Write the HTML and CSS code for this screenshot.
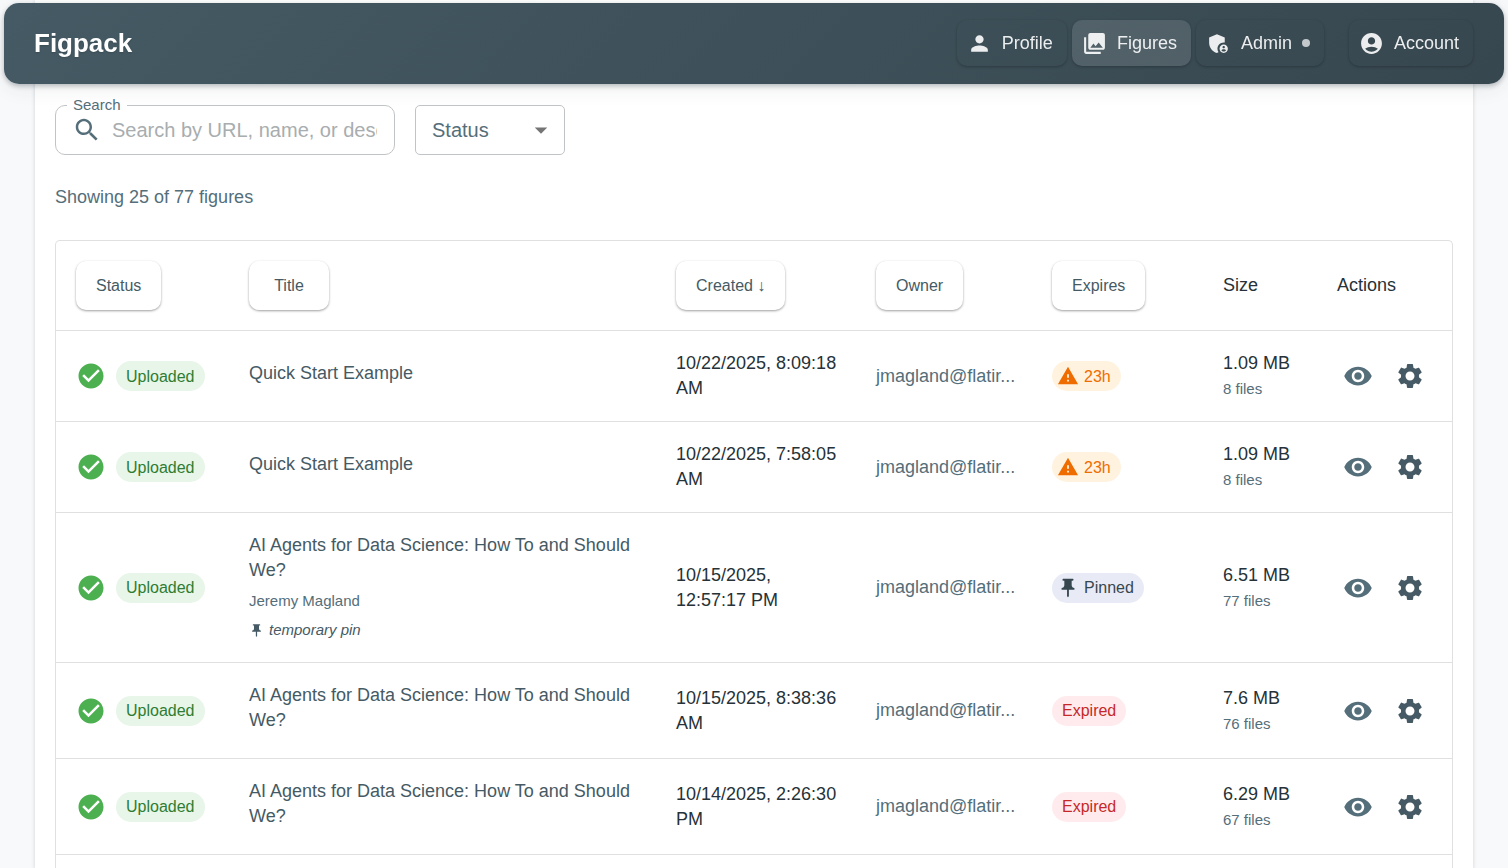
FILE: index.html
```html
<!DOCTYPE html>
<html lang="en">
<head>
<meta charset="utf-8">
<meta name="viewport" content="width=device-width, initial-scale=1">
<title>Figpack</title>
<link rel="stylesheet" href="styles.css">
</head>
<body>
<svg class="sprite" aria-hidden="true">
  <symbol id="person" viewBox="0 0 24 24"><path d="M12 12c2.21 0 4-1.79 4-4s-1.79-4-4-4-4 1.79-4 4 1.79 4 4 4zm0 2c-2.67 0-8 1.34-8 4v2h16v-2c0-2.66-5.33-4-8-4z"/></symbol>
  <symbol id="collections" viewBox="0 0 24 24"><path d="M22 16V4c0-1.1-.9-2-2-2H8c-1.1 0-2 .9-2 2v12c0 1.1.9 2 2 2h12c1.1 0 2-.9 2-2zm-11-4 2.03 2.71L16 11l4 5H8l3-4zM2 6v14c0 1.1.9 2 2 2h14v-2H4V6H2z"/></symbol>
  <symbol id="admin" viewBox="0 0 24 24"><path d="M17 11c.34 0 .67.04 1 .09V6.27L10.5 3 3 6.27v4.91c0 4.54 3.2 8.79 7.5 9.82.55-.13 1.08-.32 1.6-.55-.69-.98-1.1-2.17-1.1-3.45 0-3.31 2.69-6 6-6z"/><path d="M17 13c-2.21 0-4 1.79-4 4s1.79 4 4 4 4-1.79 4-4-1.79-4-4-4zm0 1.38c.62 0 1.12.51 1.12 1.12s-.51 1.12-1.12 1.12-1.12-.51-1.12-1.12.5-1.12 1.12-1.12zm0 5.37c-.93 0-1.74-.46-2.24-1.17.05-.72 1.51-1.08 2.24-1.08s2.19.36 2.24 1.08c-.5.71-1.31 1.17-2.24 1.17z"/></symbol>
  <symbol id="account" viewBox="0 0 24 24"><path d="M12 2C6.48 2 2 6.48 2 12s4.48 10 10 10 10-4.48 10-10S17.52 2 12 2zm0 4c1.93 0 3.5 1.57 3.5 3.5S13.93 13 12 13s-3.5-1.57-3.5-3.5S10.07 6 12 6zm0 14c-2.03 0-4.43-.82-6.14-2.88C7.55 15.8 9.68 15 12 15s4.45.8 6.14 2.12C16.43 19.18 14.03 20 12 20z"/></symbol>
  <symbol id="search" viewBox="0 0 24 24"><path d="M15.5 14h-.79l-.28-.27C15.41 12.59 16 11.11 16 9.5 16 5.91 13.09 3 9.5 3S3 5.91 3 9.5 5.91 16 9.5 16c1.61 0 3.09-.59 4.23-1.57l.27.28v.79l5 4.99L20.49 19l-4.99-5zm-6 0C7.01 14 5 11.99 5 9.5S7.01 5 9.5 5 14 7.01 14 9.5 11.99 14 9.5 14z"/></symbol>
  <symbol id="arrow" viewBox="0 0 24 24"><path d="m7 10 5 5 5-5z"/></symbol>
  <symbol id="check" viewBox="0 0 24 24"><path d="M12 2C6.48 2 2 6.48 2 12s4.48 10 10 10 10-4.48 10-10S17.52 2 12 2zm-2 15-5-5 1.41-1.41L10 14.17l7.59-7.59L19 8l-9 9z"/></symbol>
  <symbol id="warning" viewBox="0 0 24 24"><path d="M1 21h22L12 2 1 21zm12-3h-2v-2h2v2zm0-4h-2v-4h2v4z"/></symbol>
  <symbol id="pin" viewBox="0 0 24 24"><path d="M16 9V4h1c.55 0 1-.45 1-1s-.45-1-1-1H7c-.55 0-1 .45-1 1s.45 1 1 1h1v5c0 1.66-1.34 3-3 3v2h5.97v7l1 1 1-1v-7H19v-2c-1.66 0-3-1.34-3-3z"/></symbol>
  <symbol id="eye" viewBox="0 0 24 24"><path d="M12 4.5C7 4.5 2.73 7.61 1 12c1.73 4.39 6 7.5 11 7.5s9.27-3.11 11-7.5c-1.73-4.39-6-7.5-11-7.5zM12 17c-2.76 0-5-2.24-5-5s2.24-5 5-5 5 2.24 5 5-2.24 5-5 5zm0-8c-1.66 0-3 1.34-3 3s1.34 3 3 3 3-1.34 3-3-1.34-3-3-3z"/></symbol>
  <symbol id="gear" viewBox="0 0 24 24"><path d="M19.14 12.94c.04-.3.06-.61.06-.94 0-.32-.02-.64-.07-.94l2.03-1.58c.18-.14.23-.41.12-.61l-1.92-3.32c-.12-.22-.37-.29-.59-.22l-2.39.96c-.5-.38-1.03-.7-1.62-.94l-.36-2.54c-.04-.24-.24-.41-.48-.41h-3.84c-.24 0-.43.17-.47.41l-.36 2.54c-.59.24-1.13.57-1.62.94l-2.39-.96c-.22-.08-.47 0-.59.22L2.74 8.87c-.12.21-.08.47.12.61l2.03 1.58c-.05.3-.09.63-.09.94s.02.64.07.94l-2.03 1.58c-.18.14-.23.41-.12.61l1.92 3.32c.12.22.37.29.59.22l2.39-.96c.5.38 1.03.7 1.62.94l.36 2.54c.05.24.24.41.48.41h3.84c.24 0 .44-.17.47-.41l.36-2.54c.59-.24 1.13-.56 1.62-.94l2.39.96c.22.08.47 0 .59-.22l1.92-3.32c.12-.22.07-.47-.12-.61l-2.01-1.58zM12 15.6c-1.98 0-3.6-1.62-3.6-3.6s1.62-3.6 3.6-3.6 3.6 1.62 3.6 3.6-1.62 3.6-3.6 3.6z"/></symbol>
</svg>

<header class="topbar">
  <a class="brand" href="#">Figpack</a>
  <nav class="nav">
    <a class="nav-link" href="#"><svg class="icon-nav"><use href="#person"/></svg>Profile</a>
    <a class="nav-link nav-link-active" href="#" aria-current="page"><svg class="icon-nav"><use href="#collections"/></svg>Figures</a>
    <a class="nav-link" href="#"><svg class="icon-nav"><use href="#admin"/></svg>Admin<span class="dot"></span></a>
  </nav>
  <button class="nav-link account" type="button"><svg class="icon-nav"><use href="#account"/></svg>Account</button>
</header>

<main class="paper">
  <div class="filters">
    <div class="search">
      <label class="search-label" for="q">Search</label>
      <svg class="icon search-icon"><use href="#search"/></svg>
      <input class="search-input" id="q" type="text" placeholder="Search by URL, name, or description">
    </div>
    <div class="status">
      <select class="status-select" aria-label="Status"><option>Status</option></select>
      <svg class="icon status-arrow"><use href="#arrow"/></svg>
    </div>
  </div>
  <p class="summary">Showing 25 of 77 figures</p>

  <div class="table-wrap">
    <table class="figures">
      <colgroup>
        <col class="col-status"><col><col class="col-created"><col class="col-owner"><col class="col-expires"><col class="col-size"><col class="col-actions">
      </colgroup>
      <thead>
        <tr>
          <th><button class="sort" type="button">Status</button></th>
          <th><button class="sort" type="button">Title</button></th>
          <th><button class="sort" type="button">Created ↓</button></th>
          <th><button class="sort" type="button">Owner</button></th>
          <th><button class="sort" type="button">Expires</button></th>
          <th>Size</th>
          <th>Actions</th>
        </tr>
      </thead>
      <tbody>
        <tr>
          <td><div class="state"><svg class="icon ok"><use href="#check"/></svg><span class="chip chip-green">Uploaded</span></div></td>
          <td><a class="title" href="#">Quick Start Example</a></td>
          <td>10/22/2025, 8:09:18 AM</td>
          <td class="owner">jmagland@flatir...</td>
          <td><span class="chip chip-orange"><svg class="icon-chip"><use href="#warning"/></svg>23h</span></td>
          <td>1.09 MB<div class="caption">8 files</div></td>
          <td><div class="actions"><button class="action" type="button" aria-label="View"><svg class="icon"><use href="#eye"/></svg></button><button class="action action-dark" type="button" aria-label="Manage"><svg class="icon"><use href="#gear"/></svg></button></div></td>
        </tr>
        <tr>
          <td><div class="state"><svg class="icon ok"><use href="#check"/></svg><span class="chip chip-green">Uploaded</span></div></td>
          <td><a class="title" href="#">Quick Start Example</a></td>
          <td>10/22/2025, 7:58:05 AM</td>
          <td class="owner">jmagland@flatir...</td>
          <td><span class="chip chip-orange"><svg class="icon-chip"><use href="#warning"/></svg>23h</span></td>
          <td>1.09 MB<div class="caption">8 files</div></td>
          <td><div class="actions"><button class="action" type="button" aria-label="View"><svg class="icon"><use href="#eye"/></svg></button><button class="action action-dark" type="button" aria-label="Manage"><svg class="icon"><use href="#gear"/></svg></button></div></td>
        </tr>
        <tr>
          <td><div class="state"><svg class="icon ok"><use href="#check"/></svg><span class="chip chip-green">Uploaded</span></div></td>
          <td><a class="title" href="#">AI Agents for Data Science: How To and Should We?</a><div class="caption">Jeremy Magland</div><div class="pin-note"><svg class="icon-small"><use href="#pin"/></svg><em>temporary pin</em></div></td>
          <td>10/15/2025, 12:57:17 PM</td>
          <td class="owner">jmagland@flatir...</td>
          <td><span class="chip chip-indigo"><svg class="icon-chip"><use href="#pin"/></svg>Pinned</span></td>
          <td>6.51 MB<div class="caption">77 files</div></td>
          <td><div class="actions"><button class="action" type="button" aria-label="View"><svg class="icon"><use href="#eye"/></svg></button><button class="action action-dark" type="button" aria-label="Manage"><svg class="icon"><use href="#gear"/></svg></button></div></td>
        </tr>
        <tr>
          <td><div class="state"><svg class="icon ok"><use href="#check"/></svg><span class="chip chip-green">Uploaded</span></div></td>
          <td><a class="title" href="#">AI Agents for Data Science: How To and Should We?</a></td>
          <td>10/15/2025, 8:38:36 AM</td>
          <td class="owner">jmagland@flatir...</td>
          <td><span class="chip chip-red">Expired</span></td>
          <td>7.6 MB<div class="caption">76 files</div></td>
          <td><div class="actions"><button class="action" type="button" aria-label="View"><svg class="icon"><use href="#eye"/></svg></button><button class="action action-dark" type="button" aria-label="Manage"><svg class="icon"><use href="#gear"/></svg></button></div></td>
        </tr>
        <tr>
          <td><div class="state"><svg class="icon ok"><use href="#check"/></svg><span class="chip chip-green">Uploaded</span></div></td>
          <td><a class="title" href="#">AI Agents for Data Science: How To and Should We?</a></td>
          <td>10/14/2025, 2:26:30 PM</td>
          <td class="owner">jmagland@flatir...</td>
          <td><span class="chip chip-red">Expired</span></td>
          <td>6.29 MB<div class="caption">67 files</div></td>
          <td><div class="actions"><button class="action" type="button" aria-label="View"><svg class="icon"><use href="#eye"/></svg></button><button class="action action-dark" type="button" aria-label="Manage"><svg class="icon"><use href="#gear"/></svg></button></div></td>
        </tr>
      </tbody>
    </table>
  </div>
</main>
</body>
</html>
```
FILE: styles.css
```css
*, *::before, *::after { box-sizing: border-box; }

body {
  margin: 0;
  background: #f8f9fb;
  color: #263238;
  font-family: "Liberation Sans", Arial, sans-serif;
  font-size: 18px;
  line-height: 25px;
}

a { color: inherit; text-decoration: none; }
button, input, select { font: inherit; color: inherit; }
svg { display: block; flex: none; fill: currentColor; }

.sprite { position: absolute; width: 0; height: 0; }
.icon { width: 30px; height: 30px; }
.icon-nav { width: 25px; height: 25px; }
.icon-chip { width: 22px; height: 22px; }
.icon-small { width: 15px; height: 15px; }

/* Top bar */
.topbar {
  position: fixed;
  z-index: 2;
  top: 3px;
  left: 4px;
  right: 4px;
  display: flex;
  align-items: center;
  padding: 17px 31px 18px 30px;
  border-radius: 15px;
  background: linear-gradient(135deg, #455a64 0%, #37474f 100%);
  box-shadow: 0 2px 5px rgba(38, 50, 56, 0.3), 0 5px 20px rgba(38, 50, 56, 0.08);
  color: #fff;
}

.brand {
  margin-right: auto;
  font-size: 26px;
  font-weight: 700;
  text-shadow: 0 1px 2px rgba(0, 0, 0, 0.15);
}

.nav { display: flex; gap: 5px; margin-right: 25px; }

.nav-link {
  display: flex;
  align-items: center;
  gap: 10px;
  height: 46px;
  padding: 0 14px 0 10px;
  border: 0;
  border-radius: 10px;
  background: transparent;
  box-shadow: 0 1px 3px rgba(0, 0, 0, 0.25);
  color: rgba(255, 255, 255, 0.9);
}

.nav-link-active { background: rgba(255, 255, 255, 0.12); }

.dot {
  flex: none;
  width: 8px;
  height: 8px;
  border-radius: 50%;
  background: rgba(255, 255, 255, 0.7);
}

/* Page surface */
.paper {
  display: flex;
  flex-direction: column;
  min-height: 100vh;
  margin: 0 35px;
  padding: 105px 20px 0;
  background: #fff;
  box-shadow: 0 1px 4px rgba(38, 50, 56, 0.2);
}

.filters { display: flex; gap: 20px; }

.search {
  position: relative;
  display: flex;
  align-items: center;
  gap: 10px;
  width: 340px;
  height: 50px;
  padding: 0 17px 0 16px;
  border: 1px solid #c1c4c6;
  border-radius: 10px;
}

.search-label {
  position: absolute;
  top: -11px;
  left: 11px;
  padding: 0 6px;
  background: #fff;
  color: #546e7a;
  font-size: 15px;
  line-height: 20px;
}

.search-icon { color: #546e7a; }

.search-input {
  flex: 1;
  min-width: 0;
  padding: 0;
  border: 0;
  outline: 0;
  background: transparent;
  font-size: 20px;
}

.search-input::placeholder { color: #a8adaf; opacity: 1; }

.status { position: relative; width: 150px; }

.status-select {
  width: 100%;
  height: 50px;
  padding: 0 40px 0 16px;
  border: 1px solid #c1c4c6;
  border-radius: 5px;
  appearance: none;
  background: #fff;
  color: #546e7a;
  font-size: 20px;
}

.status-arrow {
  position: absolute;
  top: 10px;
  right: 9px;
  color: #757575;
  pointer-events: none;
}

.summary { margin: 30px 0; color: #546e7a; }

/* Figures table */
.table-wrap {
  flex: 1;
  border: 1px solid #e0e0e0;
  border-bottom: 0;
  border-radius: 5px 5px 0 0;
}

.figures {
  width: 100%;
  table-layout: fixed;
  border-spacing: 0;
}

.col-status { width: 173px; }
.col-created { width: 200px; }
.col-owner { width: 176px; }
.col-expires { width: 171px; }
.col-size { width: 114px; }
.col-actions { width: 135px; }

.figures th,
.figures td {
  padding: 20px 15px 20px 20px;
  border-bottom: 1px solid #e0e0e0;
  font-weight: 400;
  text-align: left;
  vertical-align: middle;
}

.sort {
  display: block;
  min-width: 80px;
  height: 49px;
  padding: 0 20px;
  border: 0;
  border-radius: 10px;
  background: #fff;
  box-shadow: 0 1px 3px rgba(0, 0, 0, 0.2), 0 1px 2px rgba(0, 0, 0, 0.2);
  color: #455a64;
  font-size: 16px;
  white-space: nowrap;
}

.state { display: flex; align-items: center; gap: 10px; }
.ok { color: #4caf50; }

.title { display: block; margin-bottom: 5px; color: #455a64; }
.figures .owner { color: #546e7a; white-space: nowrap; }

.caption {
  color: #546e7a;
  font-size: 15px;
  line-height: 25px;
}

.pin-note {
  display: flex;
  align-items: center;
  gap: 5px;
  margin-top: 5px;
  color: #455a64;
  font-size: 15px;
  line-height: 24px;
}

.chip {
  display: flex;
  align-items: center;
  gap: 5px;
  width: fit-content;
  height: 30px;
  padding: 0 10px;
  border-radius: 15px;
  font-size: 16px;
}

.chip:has(.icon-chip) { padding-left: 5px; }
.chip-green { background: #e8f5e9; color: #2e7d32; }
.chip-orange { background: #fff3e0; color: #ef6c00; }
.chip-indigo { background: #e8eaf6; color: #37474f; }
.chip-red { background: #ffebee; color: #c62828; }

.actions { display: flex; gap: 10px; }

.action {
  padding: 6px;
  border: 0;
  border-radius: 50%;
  background: transparent;
  color: #546e7a;
}

.action-dark { color: #455a64; }
```
